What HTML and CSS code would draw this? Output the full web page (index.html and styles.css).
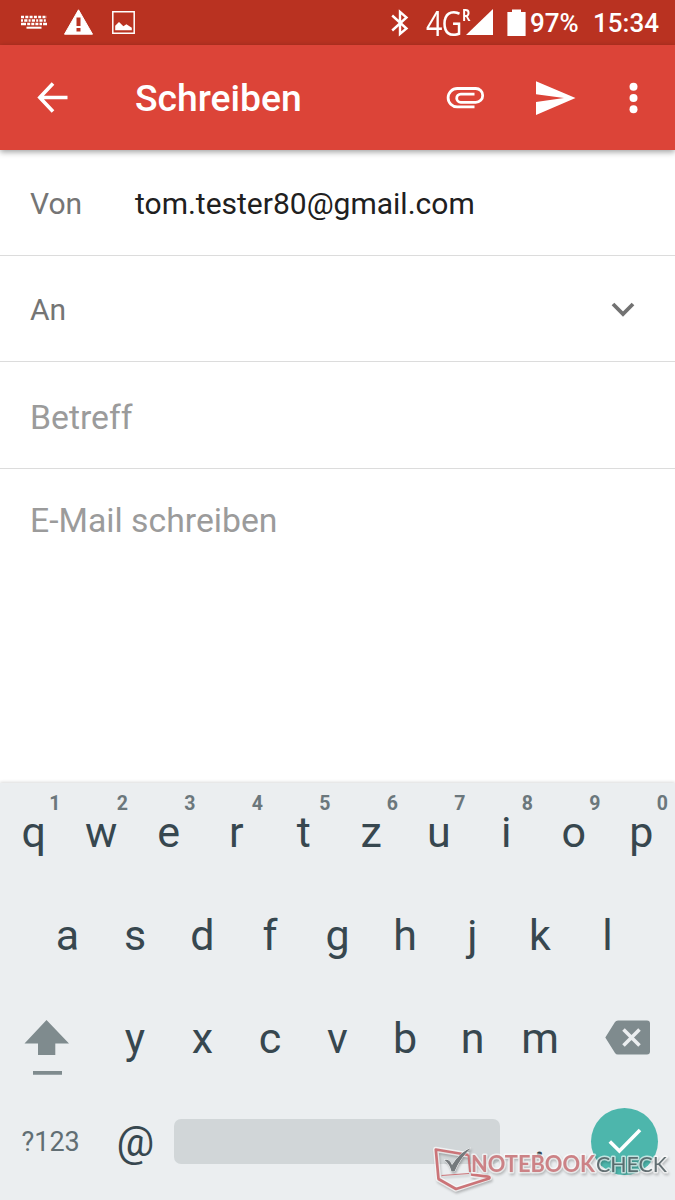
FILE: index.html
```html
<!DOCTYPE html>
<html lang="de">
<head>
<meta charset="utf-8">
<title>Schreiben</title>
<link rel="stylesheet" href="styles.css">
</head>
<body>
<div class="screen">
  <header class="status">
    <svg class="st-keyboard" width="27" height="15" viewBox="0 0 27 15" fill="none" stroke="#fff">
      <path d="M0 2h26" stroke-width="2.6" stroke-dasharray="3 1.3"/>
      <path d="M0 5.5h26" stroke-width="2.4" stroke-dasharray="2 1.2 3.2 1.2"/>
      <path d="M0 9h26" stroke-width="2.6" stroke-dasharray="5 1.2 3 1.1 3 1.1 3 1.1 2.5 1.1 5"/>
      <path d="M5.5 12.7h15" stroke-width="2"/>
    </svg>
    <svg class="st-warning" width="29" height="26" viewBox="0 0 29 26">
      <path d="M14.5.8 28.5 25.2H.5z" fill="#fff" stroke="#fff" stroke-linejoin="round"/>
      <path d="M12.5 8.5h4v8.5h-4zM12.5 19h4v3.5h-4z" fill="#b93221"/>
    </svg>
    <svg class="st-image" width="23" height="23" viewBox="0 0 23 23">
      <path d="M.8.8h21.4v21.4H.8z" fill="none" stroke="#fff" stroke-width="1.5"/>
      <path d="M3.2 19.2v-4.4L7 11l4.4 4.2 3-2 5.4 3.6v2.4z" fill="#fff"/>
    </svg>
    <svg class="st-bluetooth" width="18" height="28" viewBox="0 0 18 28" fill="none" stroke="#fff" stroke-width="2.4">
      <path d="M1.2 6.5 15.5 19.5 9 25V2.8l6.5 5.7L1.2 21.5"/>
    </svg>
    <span class="network">4G</span><span class="roaming">R</span>
    <svg class="st-signal" width="27" height="27" viewBox="0 0 27 27"><path d="M27 0v26H0z" fill="#fff"/></svg>
    <svg class="st-battery" width="19" height="28" viewBox="0 0 19 28"><path d="M5 .5h9v2.4h4.6V27H.4V2.9H5z" fill="#fff"/></svg>
    <span class="percent">97%</span>
    <span class="clock">15:34</span>
  </header>

  <div class="appbar">
    <svg class="back" width="31" height="31" viewBox="0 0 31 31" fill="none" stroke="#fff" stroke-width="3.6"><path d="M16 1.5 2.8 15.5 16 29.5M3 15.5h27.5"/></svg>
    <h1 class="title">Schreiben</h1>
    <svg class="attach" width="39" height="23" viewBox="0 0 39 23" fill="none" stroke="#fff" stroke-width="2.8">
      <path d="M28.5 19.9H11.3a9.2 9.2 0 0 1 0-18.4h18.5a6.9 6.9 0 0 1 0 13.8H14.8a4.1 4.1 0 0 1 0-8.2h13.7"/>
    </svg>
    <svg class="send" width="40" height="34" viewBox="0 0 40 34" fill="#fff"><path d="M0 .3 39.5 17 0 34V21l28-4L0 13.3z"/></svg>
    <svg class="more" width="9" height="32" viewBox="0 0 9 32" fill="#fff"><circle cx="4.5" cy="4.7" r="4"/><circle cx="4.5" cy="16" r="4"/><circle cx="4.5" cy="27.3" r="4"/></svg>
  </div>

  <main class="compose">
    <div class="field from"><span class="label">Von</span><span class="value">tom.tester80@gmail.com</span></div>
    <div class="field to"><span class="label">An</span>
      <svg class="chevron" width="24" height="16" viewBox="0 0 24 16" fill="none" stroke="#727272" stroke-width="3.8"><path d="M2 2 12 12 22 2"/></svg>
    </div>
    <div class="field subject">Betreff</div>
    <div class="message">E-Mail schreiben</div>
  </main>

  <section class="keyboard">
    <div class="keys row-top">
      <div class="key">q<sup>1</sup></div><div class="key">w<sup>2</sup></div><div class="key">e<sup>3</sup></div><div class="key">r<sup>4</sup></div><div class="key">t<sup>5</sup></div><div class="key">z<sup>6</sup></div><div class="key">u<sup>7</sup></div><div class="key">i<sup>8</sup></div><div class="key">o<sup>9</sup></div><div class="key">p<sup>0</sup></div>
    </div>
    <div class="keys row-home">
      <div class="key">a</div><div class="key">s</div><div class="key">d</div><div class="key">f</div><div class="key">g</div><div class="key">h</div><div class="key">j</div><div class="key">k</div><div class="key">l</div>
    </div>
    <div class="keys row-lower">
      <div class="key shift"><svg width="46" height="56" viewBox="0 0 46 56" fill="#7f8b8e"><path d="M22.5 0 45 23.5H31.3V35H14V23.5H.5zM9 51h29v3.8H9z"/></svg></div>
      <div class="key">y</div><div class="key">x</div><div class="key">c</div><div class="key">v</div><div class="key">b</div><div class="key">n</div><div class="key">m</div>
      <div class="key erase"><svg width="46" height="35" viewBox="0 0 46 35"><path d="M13 .5h29a3 3 0 0 1 3 3v28a3 3 0 0 1-3 3H13q-2 0-3-1.5L.3 17.5 10 2Q11 .5 13 .5z" fill="#7f8b8e"/><path d="m18.5 9.5 16 16m0-16-16 16" stroke="#ebeef0" stroke-width="3.6"/></svg></div>
    </div>
    <div class="keys row-bottom">
      <div class="key symbols">?123</div>
      <div class="key at">@</div>
      <div class="spacebar"></div>
      <div class="key dot">.</div>
      <div class="enter"><svg width="34" height="26" viewBox="0 0 34 26" fill="none" stroke="#fff" stroke-width="3.6"><path d="M1.8 13.5 11.4 23 32 2"/></svg></div>
    </div>
  </section>

  <svg class="watermark" width="244" height="56" viewBox="0 0 244 56">
    <g fill="none" stroke="#fff" stroke-width="5.5" stroke-linejoin="round" opacity=".7">
      <path d="M36 10 2.8 4.5 5.5 34 23 44 56 33 38 29.5"/>
    </g>
    <g fill="none" stroke="#cb7478" stroke-linejoin="round">
      <path d="M35.5 10 2.8 4.5 5.5 34 23 44 56 33.5q1.5-1.4-1-1.8L38 29.5" stroke-width="2.7"/>
      <path d="M35.5 10 37 27" stroke-width="2"/>
      <path d="M8.5 30.5 36 28.5" stroke-width="1.1"/>
    </g>
    <path d="M11.5 15q5-1.2 7.5 5Q28 6 38 3 27 13 21.5 26.5h-3Q16.500 18.500 11.5 15z" fill="#74797c" stroke="#fff" stroke-width="1" paint-order="stroke"/>
    <text class="mark-red" x="38" y="27.3" textLength="124" lengthAdjust="spacingAndGlyphs">NOTEBOOK</text>
    <text class="mark-gray" x="163" y="27.3" textLength="71" lengthAdjust="spacingAndGlyphs">CHECK</text>
  </svg>
</div>
</body>
</html>
```
FILE: styles.css
```css
* { box-sizing: border-box; }
body { margin: 0; font-family: Roboto, "Liberation Sans", sans-serif; }
svg { display: block; flex: none; }

.screen {
  position: relative;
  display: flex;
  flex-direction: column;
  width: 675px;
  height: 1200px;
  overflow: hidden;
  background: #fff;
}

.status {
  display: flex;
  align-items: center;
  height: 45px;
  padding: 0 15px 0 21px;
  background: #b93221;
  color: #fff;
  white-space: nowrap;
}
.st-warning { margin-left: 16px; margin-top: -1px; }
.st-image { margin-left: 19px; }
.st-bluetooth { margin-left: auto; }
.network {
  width: 36px;
  margin-left: 17px;
  font: 500 35px/46px "Open Sans", sans-serif;
  letter-spacing: -1px;
  transform: scaleX(.82);
  transform-origin: left;
}
.roaming { width: 8px; font: 700 16px/16px "Open Sans", sans-serif; transform: scaleX(.8); transform-origin: left; margin-top: -15px; }
.st-signal { margin-left: -4px; }
.st-battery { margin-left: 14px; }
.percent { width: 48px; margin-left: 4px; font-size: 26px; font-weight: 500; line-height: 46px; }
.clock { margin-left: 15px; margin-right: 1px; font-size: 26px; font-weight: 500; line-height: 46px; }

.appbar {
  position: relative;
  z-index: 1;
  display: flex;
  align-items: center;
  height: 105px;
  padding: 0 37px;
  background: #dc4438;
  color: #fff;
  box-shadow: 0 2px 6px rgba(0, 0, 0, .38);
}
.title { margin: 0 0 0 67px; font-size: 37.3px; font-weight: 500; line-height: 44px; }
.attach { margin-left: auto; margin-top: 2px; }
.send { margin-left: 51px; }
.more { margin-left: 53px; }

.compose { flex: 1; }
.field {
  display: flex;
  align-items: center;
  padding: 2px 30px 0;
  border-bottom: 1px solid #dcdcdc;
  font-size: 30px;
  color: #757575;
}
.from { height: 106px; }
.to { height: 106px; }
.subject { height: 107px; padding-top: 5px; font-size: 33.75px; color: #9b9b9b; }
.label { width: 105px; }
.value { color: #202020; }
.chevron { margin-left: auto; margin-right: 10px; }
.message { padding: 32px 30px; font-size: 33.75px; line-height: 40px; color: #9b9b9b; }

.keyboard {
  height: 417px;
  padding-bottom: 5px;
  background: #ebeef0;
  color: #37474f;
  box-shadow: 0 -1px 3px rgba(0, 0, 0, .15);
}
.keys { display: grid; grid-auto-flow: column; grid-auto-columns: 67.5px; height: 103px; align-items: center; }
.key { position: relative; font-size: 43px; line-height: 58px; padding-bottom: 2px; text-align: center; }
.key sup {
  position: absolute;
  top: -11px;
  right: 7px;
  font-size: 19.5px;
  font-weight: 700;
  line-height: 24px;
  color: #6b777c;
}
.row-top { height: 101px; padding-bottom: 2px; }
.row-home { padding-left: 33.75px; }
.row-lower { grid-template-columns: 101.25px repeat(7, 67.5px) 101.25px; }
.shift svg { margin: 20px 0 0 24px; }
.erase svg { margin: 0 0 0 31px; }
.row-bottom { grid-template-columns: 101.25px 73px 326px 79px 95.5px; }
.symbols { padding-bottom: 0; font-size: 27px; color: #616e73; }
.at { padding: 1px 5px 0 0; font-size: 42px; }
.dot { height: 60px; }
.spacebar { height: 45px; border-radius: 7px; background: #d1d6d8; }
.enter {
  display: flex;
  align-items: center;
  justify-content: center;
  width: 67px;
  height: 67px;
  margin-left: 12px;
  border-radius: 50%;
  background: #4db6ac;
}
.enter svg { margin-bottom: 2px; }

.watermark { position: absolute; left: 433px; top: 1145px; filter: drop-shadow(1px 2px 1px rgba(0, 0, 0, .25)); }
.watermark text {
  font-family: Lato, sans-serif;
  font-size: 22px;
  font-weight: 700;
  paint-order: stroke;
  stroke: rgba(255, 255, 255, .65);
  stroke-width: 3px;
  stroke-linejoin: round;
}
.watermark .mark-red { fill: #cc8286; }
.watermark .mark-gray { font-weight: 400; fill: rgba(65, 80, 84, .8); }
```
